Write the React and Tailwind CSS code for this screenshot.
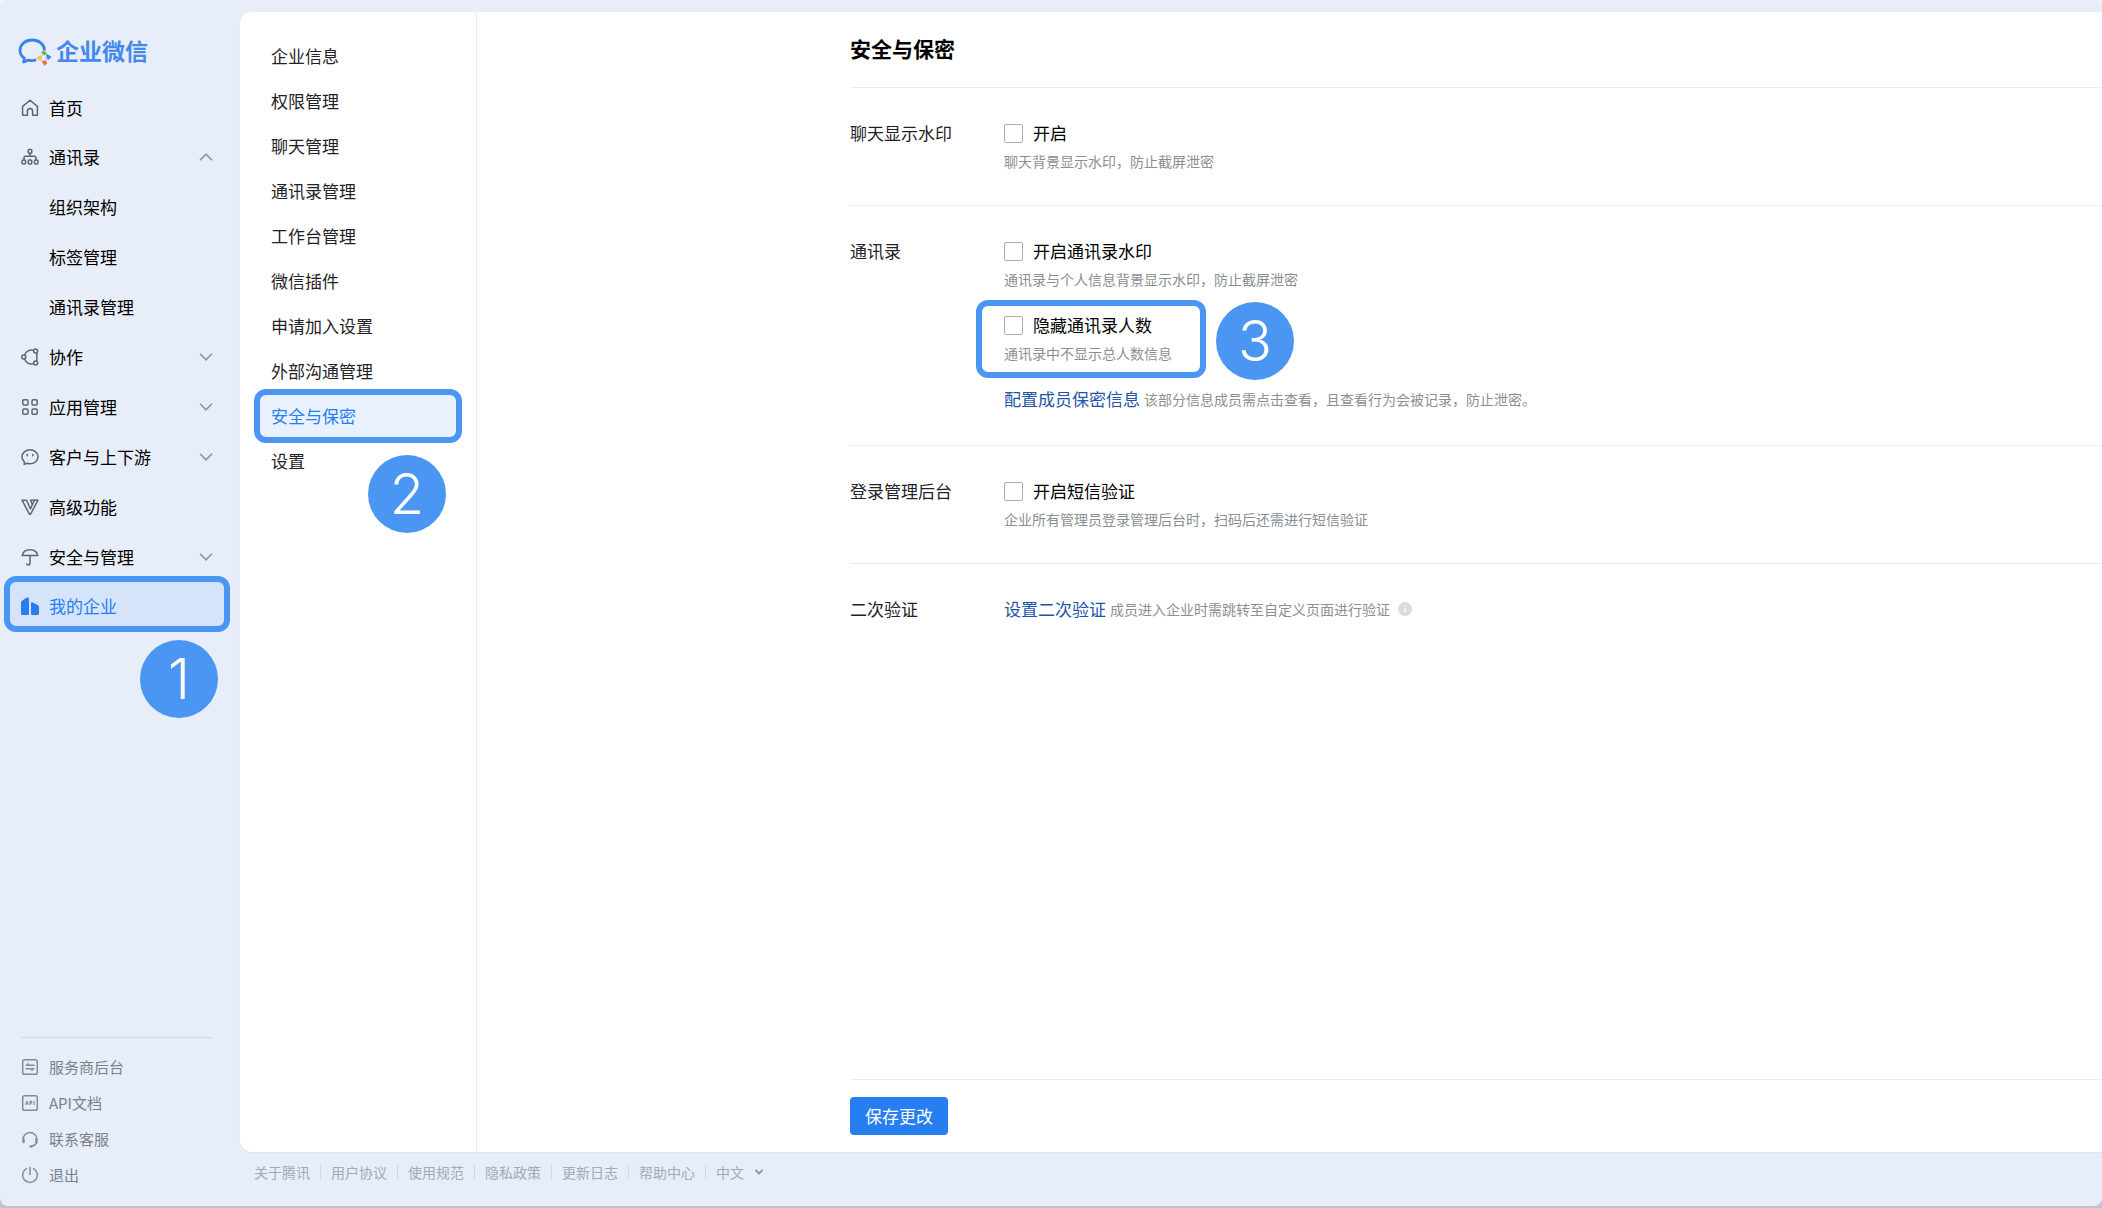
const ink = "stroke-[#5f666e]";

function Svg({ children, className = ink }) {
  return (
    <svg
      viewBox="0 0 18 18"
      className={`h-[18px] w-[18px] shrink-0 fill-none ${className}`}
      strokeWidth="1.5"
      strokeLinecap="round"
      strokeLinejoin="round"
    >
      {children}
    </svg>
  );
}

const HomeIcon = () => (
  <Svg>
    <path d="M1.6 7.4 9 1.2l7.4 6.2v8.8h-4.8v-4a2.6 2.6 0 0 0-5.2 0v4H1.6Z" />
  </Svg>
);

const ContactsIcon = () => (
  <Svg>
    <rect x="7.2" y="1.6" width="3.6" height="3.6" rx="1" />
    <path d="M9 5.2v3M3 11.8V9.7q0-1.5 1.5-1.5h9q1.500 0 1.500 1.500v2.100" />
    <rect x="1" y="12" width="3.6" height="4" rx="1.2" />
    <rect x="7.2" y="12" width="3.6" height="4" rx="1.2" />
    <rect x="13.400" y="12" width="3.6" height="4" rx="1.2" />
  </Svg>
);

const CollabIcon = () => (
  <Svg>
    <circle cx="2.8" cy="9" r="2" />
    <circle cx="14.6" cy="3" r="2" />
    <circle cx="14.6" cy="15" r="2" />
    <path d="M3.6 7A7 7 0 0 1 12.400 2.400M3.6 11a7 7 0 0 0 8.800 4.600M15.800 5v8" />
  </Svg>
);

const AppsIcon = () => (
  <Svg>
    <rect x="1.8" y="1.8" width="5.2" height="5.2" rx="1.2" />
    <rect x="11" y="1.8" width="5.2" height="5.2" rx="1.2" />
    <rect x="1.8" y="11" width="5.2" height="5.2" rx="1.2" />
    <rect x="11" y="11" width="5.2" height="5.2" rx="1.2" />
  </Svg>
);

const CustomerIcon = () => (
  <Svg>
    <path d="M3.200 16.400 3.400 14A7.300 7.300 0 0 1 1 8.800C1 4.900 4.600 1.800 9 1.800s8 3.100 8 7-3.600 7-8 7a9 9 0 0 1-3-.5Z" />
    <path d="M6.200 6.600v1.200M11.800 6.600v1.200" />
  </Svg>
);

const AdvancedIcon = () => (
  <Svg>
    <path d="M1 2.200h4.600L9.400 11l2-4.600-1.900-4.200H17L9.600 16.200H8.400Z" />
    <path d="m11.400 6.400 2-4.200" />
  </Svg>
);

const UmbrellaIcon = () => (
  <Svg>
    <path d="M1.200 7.600C2 4 5.200 1.800 9 1.800s7 2.200 7.800 5.800ZM9 7.800v7.400q0 1.800-1.600 1.800-1.400 0-1.600-1.200" />
  </Svg>
);

const CompanyIcon = () => (
  <Svg className="stroke-none">
    <path
      fill="#267ef0"
      d="M0 17V5.500Q0 4.500.8 3.900L5.600.6Q8 0 8 2V17Q8 18 7 18H1Q0 18 0 17ZM10 17V6.200Q10 4.800 11.400 5.300L17 8.200Q18 8.800 18 9.800V16.500Q18 18 16.500 18H11Q10 18 10 17Z"
    />
  </Svg>
);

const grayInk = "stroke-[#868c96]";

const ProviderIcon = () => (
  <Svg className={grayInk}>
    <rect x="1.7" y="1.7" width="14.6" height="14.6" rx="1.8" />
    <path d="M5 7.200h8M5 10.800h8M7.200 5.800v1.400M11 10.800v1.600" />
  </Svg>
);

const ApiIcon = () => (
  <Svg className={grayInk}>
    <rect x="1.7" y="1.7" width="14.6" height="14.6" rx="1.8" />
    <path strokeWidth="1.2" d="M4.600 10.400 6 7.400l1 3M9 10.400v-3h1.600v1.600H9M13 7.400v3" />
  </Svg>
);

const SupportIcon = () => (
  <Svg className={grayInk}>
    <path d="M2 9.800A7 7 0 0 1 16 9.400M15.600 12.600q-1 2.900-4.600 3.600" />
    <path strokeWidth="2.4" d="M2.600 9.400v2.600M15.400 9.400v2.600M9.600 16.400h1" />
  </Svg>
);

const PowerIcon = () => (
  <Svg className={grayInk}>
    <path d="M5.400 2.600a7.400 7.400 0 1 0 7.200 0M9 1.400v7" />
  </Svg>
);

const Logo = () => (
  <svg viewBox="0 0 34 28" className="h-7 w-[34px] shrink-0" fill="none">
    <path
      d="M26.500 12.500C26.300 6.300 20.900 2 14.200 2 7.300 2 2 6.500 2 12.200c0 3.400 1.700 6.100 4.400 8L5.600 24l4.600-1.900c2.900.7 5.800.5 8-.2"
      stroke="#3b82ec"
      strokeWidth="2.8"
      strokeLinejoin="round"
    />
    <path d="M23 14.600 26 12.200l2.800 3.200-2.600 2.200Z" fill="#63bd3c" />
    <path d="m28.400 15.800 5.200 3-3.400 3.200-2.100-2.800Z" fill="#3b82ec" />
    <path d="m23.600 23.200 4.200-1 1.400 3-2.800 2.600Z" fill="#ee6a3c" />
    <path d="m18 20 4.400-3 1.400 3-1.600 3Z" fill="#fbc24d" />
    <path d="m22.600 19.200 2-2.200M28 18l1 2M27.600 22.200l1.600-1.400M22.800 21.400l1.800 1.600" stroke="#9db9d8" />
  </svg>
);

function Chevron({ up }) {
  return (
    <svg viewBox="0 0 14 8" className="h-2 w-3.5 fill-none stroke-[#8f959e]" strokeWidth="1.6">
      <path d={up ? "M1 7.200 7 1.200l6 6" : "m1 .8 6 6 6-6"} />
    </svg>
  );
}

// Numbered step marker, placed next to a highlighted control
function Step({ n, className }) {
  return (
    <span
      className={`absolute z-10 flex h-[78px] w-[78px] items-center justify-center rounded-full bg-[#4c96f3] font-['Inter',sans-serif] text-[56px] leading-none font-[350] text-white ${className}`}
    >
      {n}
    </span>
  );
}

const navItems = [
  { label: "通讯录", icon: ContactsIcon, chevron: "up" },
  { label: "组织架构" },
  { label: "标签管理" },
  { label: "通讯录管理" },
  { label: "协作", icon: CollabIcon, chevron: "down" },
  { label: "应用管理", icon: AppsIcon, chevron: "down" },
  { label: "客户与上下游", icon: CustomerIcon, chevron: "down" },
  { label: "高级功能", icon: AdvancedIcon },
  { label: "安全与管理", icon: UmbrellaIcon, chevron: "down" },
];

const toolItems = [
  { label: "服务商后台", icon: ProviderIcon },
  { label: "API文档", icon: ApiIcon },
  { label: "联系客服", icon: SupportIcon },
  { label: "退出", icon: PowerIcon },
];

const menuTop = [
  "企业信息",
  "权限管理",
  "聊天管理",
  "通讯录管理",
  "工作台管理",
  "微信插件",
  "申请加入设置",
  "外部沟通管理",
];

const footerLinks = ["关于腾讯", "用户协议", "使用规范", "隐私政策", "更新日志", "帮助中心"];

function Sidebar() {
  return (
    <aside className="flex w-60 shrink-0 flex-col">
      <div className="flex items-start gap-1 pt-[38px] pl-[18px]">
        <Logo />
        <span className="text-[23px] leading-6 font-bold text-[#4488ec]">企业微信</span>
      </div>

      <nav className="mt-[18px] text-[17px] text-black">
        <a href="#" className="flex h-12 items-center gap-2.5 pl-[21px]">
          <HomeIcon />
          首页
        </a>
        {navItems.map(({ label, icon: Icon, chevron }) => (
          <a
            key={label}
            href="#"
            className={`flex h-[50px] items-center gap-2.5 pr-[27px] ${Icon ? "pl-[21px]" : "pl-[49px]"}`}
          >
            {Icon && <Icon />}
            <span className="grow">{label}</span>
            {chevron && <Chevron up={chevron === "up"} />}
          </a>
        ))}
        <div className="relative">
          <a href="#" className="flex h-12 items-center gap-2.5 pl-[21px] text-[#267ef0]">
            <span className="absolute -top-1.5 right-2.5 left-1 h-14 rounded-xl border-6 border-[#4c96f3] bg-[#d5e4fa]" />
            <span className="relative flex items-center gap-2.5">
              <CompanyIcon />
              我的企业
            </span>
          </a>
          <Step n={1} className="top-[58px] left-[140px]" />
        </div>
      </nav>

      <div className="mt-auto mr-7 ml-[21px] border-t border-[#d3dae5] pt-[11px] pb-[13px] text-[15px] text-[#7b818b]">
        {toolItems.map(({ label, icon: Icon }) => (
          <a key={label} href="#" className="flex h-9 items-center gap-2.5">
            <Icon />
            {label}
          </a>
        ))}
      </div>
    </aside>
  );
}

function SubMenu() {
  return (
    <nav className="w-[237px] shrink-0 border-r border-[#e9ebee] pt-[21px] text-[17px] text-[#1f2329]">
      {menuTop.map((label) => (
        <a key={label} href="#" className="flex h-[45px] items-center pl-[31px]">
          {label}
        </a>
      ))}
      <div className="relative">
        <a href="#" className="flex h-[45px] items-center pl-[31px] text-[#267ef0]">
          <span className="absolute -top-1 right-3.5 left-3.5 h-[54px] rounded-xl border-6 border-[#4c96f3] bg-[#e9f1fe]" />
          <span className="relative">安全与保密</span>
        </a>
        <Step n={2} className="top-[62px] left-32" />
      </div>
      <a href="#" className="flex h-[45px] items-center pl-[31px]">
        设置
      </a>
    </nav>
  );
}

function Option({ label, hint }) {
  return (
    <div>
      <label className="flex h-[26px] w-fit items-center gap-2.5 text-black">
        <input
          type="checkbox"
          className="h-[19px] w-[19px] appearance-none rounded-xs border border-[#a9adb3] bg-white checked:bg-[#267ef0]"
        />
        {label}
      </label>
      <p className="mt-1 text-sm leading-[22px] text-[#8a8e95]">{hint}</p>
    </div>
  );
}

function Section({ title, last, children }) {
  return (
    <section className={`flex pt-8 pb-[33px] text-[17px] ${last ? "" : "border-b border-[#ebecee]"}`}>
      <h2 className="w-[154px] shrink-0 leading-[26px] text-[#1f2329]">{title}</h2>
      <div className="flex flex-col gap-[22px]">{children}</div>
    </section>
  );
}

export default function App() {
  return (
    <div className="min-h-screen bg-linear-to-b from-[#f3f3f1] to-[#c3c3c3] pb-0.5 font-['Noto_Sans_CJK_SC',sans-serif]">
      <div className="flex min-h-[calc(100vh-2px)] rounded-lg bg-[#e7edf9]">
        <Sidebar />

        <div className="flex min-w-0 grow flex-col pt-3">
          <div className="flex grow rounded-l-xl bg-white shadow-xs">
            <SubMenu />

            <main className="flex min-w-0 grow flex-col pl-[373px]">
              <h1 className="border-b border-[#ebecee] pt-5 pb-[23px] text-[21px] leading-8 font-bold text-black">
                安全与保密
              </h1>

              <Section title="聊天显示水印">
                <Option label="开启" hint="聊天背景显示水印，防止截屏泄密" />
              </Section>

              <Section title="通讯录">
                <Option label="开启通讯录水印" hint="通讯录与个人信息背景显示水印，防止截屏泄密" />
                <div className="relative">
                  <span className="pointer-events-none absolute -top-3 -left-7 h-[78px] w-[230px] rounded-xl border-6 border-[#4c96f3]" />
                  <Option label="隐藏通讯录人数" hint="通讯录中不显示总人数信息" />
                  <Step n={3} className="-top-2.5 left-[212px]" />
                </div>
                <p className="flex items-center gap-1 leading-[26px]">
                  <a href="#" className="text-[#1f55a5]">配置成员保密信息</a>
                  <span className="text-sm leading-[26px] text-[#8a8e95]">
                    该部分信息成员需点击查看，且查看行为会被记录，防止泄密。
                  </span>
                </p>
              </Section>

              <Section title="登录管理后台">
                <Option label="开启短信验证" hint="企业所有管理员登录管理后台时，扫码后还需进行短信验证" />
              </Section>

              <Section title="二次验证" last>
                <p className="flex items-center gap-1 leading-[26px]">
                  <a href="#" className="text-[#1f55a5]">设置二次验证</a>
                  <span className="text-sm leading-[26px] text-[#8a8e95]">
                    成员进入企业时需跳转至自定义页面进行验证
                  </span>
                  <svg viewBox="0 0 14 14" className="ml-1 h-3.5 w-3.5">
                    <circle cx="7" cy="7" r="7" fill="#dadcdf" />
                    <path d="M7.600 3.200v1M7.200 6 6.600 10.400" stroke="#fff" strokeWidth="1.4" />
                  </svg>
                </p>
              </Section>

              <div className="mt-auto border-t border-[#ebecee] py-[17px]">
                <button
                  type="button"
                  className="h-[38px] rounded bg-[#267ef0] px-[15px] text-[17px] text-white"
                >
                  保存更改
                </button>
              </div>
            </main>
          </div>

          <footer className="flex h-[54px] items-center pb-3.5 pl-3.5 text-sm text-[#a3aab5]">
            {footerLinks.map((label) => (
              <a key={label} href="#" className="mr-2.5 flex items-center gap-2.5">
                {label}
                <span className="h-3.5 w-px bg-[#d3d9e3]" />
              </a>
            ))}
            <button type="button" className="flex items-center gap-2.5">
              中文
              <svg viewBox="0 0 10 8" className="h-2 w-2.5 fill-none stroke-[#8f959e]" strokeWidth="1.8">
                <path d="m1.500 2 3.500 3.500L8.500 2" />
              </svg>
            </button>
          </footer>
        </div>
      </div>
    </div>
  );
}
